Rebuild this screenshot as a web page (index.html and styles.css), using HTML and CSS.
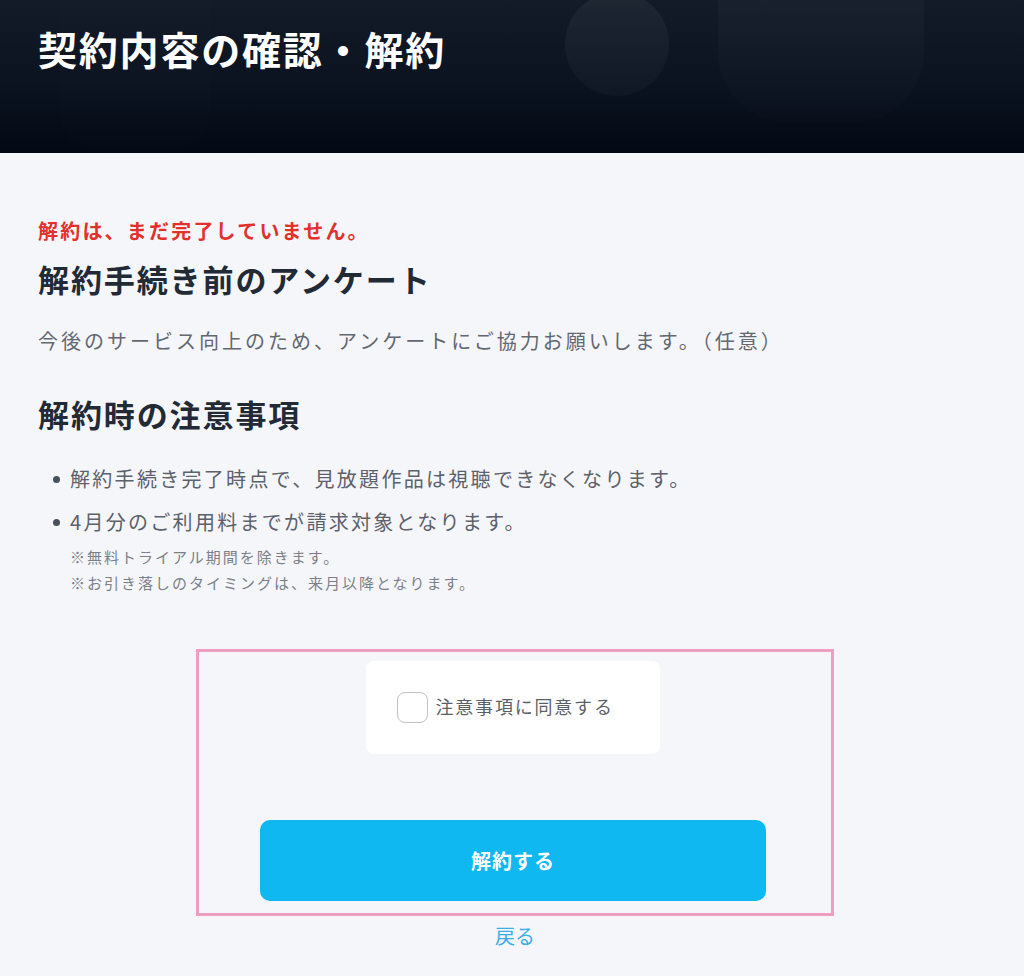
FILE: index.html
```html
<!DOCTYPE html>
<html lang="ja">
<head>
<meta charset="utf-8">
<link rel="stylesheet" href="styles.css">
</head>
<body>
<header class="hero">
  <div class="deco deco-circle"></div>
  <div class="deco deco-u"></div>
  <div class="deco deco-bar"></div>
  <h1 class="hero-title">契約内容の確認・解約</h1>
</header>
<main class="content">
  <p class="warning">解約は、まだ完了していません。</p>
  <h2 class="section-title">解約手続き前のアンケート</h2>
  <p class="lead">今後のサービス向上のため、アンケートにご協力お願いします。（任意）</p>
  <h2 class="section-title second">解約時の注意事項</h2>
  <ul class="notes">
    <li>解約手続き完了時点で、見放題作品は視聴できなくなります。</li>
    <li>4月分のご利用料までが請求対象となります。
      <div class="sub">※無料トライアル期間を除きます。</div>
      <div class="sub">※お引き落しのタイミングは、来月以降となります。</div>
    </li>
  </ul>
  <div class="action-area">
    <div class="agree-card">
      <label class="agree">
        <span class="checkbox"></span>
        <span class="agree-text">注意事項に同意する</span>
      </label>
    </div>
    <button class="cancel-btn" type="button">解約する</button>
  </div>
  <div class="back-row"><a class="back" href="#">戻る</a></div>
</main>
</body>
</html>
```
FILE: styles.css
```css
* { box-sizing: border-box; }
html, body { margin: 0; padding: 0; }
body {
  background: #f5f6fa;
  font-family: "Noto Sans CJK JP", "Noto Sans", sans-serif;
  color: #2a2f3a;
}
.hero {
  position: relative;
  height: 153px;
  overflow: hidden;
  background: linear-gradient(180deg, #131b28 0%, #0b1320 55%, #020914 100%);
  padding: 22px 38px 0;
}
.deco { position: absolute; }
.deco-circle {
  left: 565px; top: -8px;
  width: 104px; height: 104px;
  border-radius: 50%;
  background: linear-gradient(180deg, rgba(255,255,255,0.05) 0%, rgba(255,255,255,0.025) 100%);
}
.deco-u {
  left: 718px; top: -10px;
  width: 206px; height: 132px;
  border-radius: 0 0 70px 70px;
  background: linear-gradient(180deg, rgba(255,255,255,0.028) 0%, rgba(255,255,255,0.008) 100%);
}
.deco-bar {
  left: 60px; top: 0;
  width: 150px; height: 153px;
  border-radius: 0 0 40px 40px;
  background: rgba(255,255,255,0.008);
}
.hero-title {
  position: relative;
  margin: 0;
  color: #fff;
  font-size: 39px;
  font-weight: 700;
  line-height: 52px;
  letter-spacing: 1.8px;
}
.content {
  padding: 64px 38px 20px;
}
.warning {
  margin: 0;
  color: #e3302b;
  font-size: 20px;
  font-weight: 700;
  line-height: 28px;
  letter-spacing: 2.2px;
}
.section-title {
  margin: 12px 0 0;
  font-size: 31px;
  font-weight: 700;
  line-height: 44px;
  letter-spacing: 1.9px;
  color: #222a35;
}
.section-title.second { margin-top: 36px; }
.lead {
  margin: 25px 0 0;
  font-size: 20px;
  line-height: 30px;
  letter-spacing: 3px;
  color: #636870;
}
.notes {
  margin: 28px 0 0;
  padding: 0 0 0 32px;
  list-style: none;
  color: #5c616a;
}
.notes li {
  position: relative;
  font-size: 20px;
  line-height: 30px;
  letter-spacing: 2.3px;
  margin-bottom: 13px;
}
.notes li::before {
  content: "";
  position: absolute;
  left: -17px; top: 12px;
  width: 7px; height: 7px;
  border-radius: 50%;
  background: #4a505a;
}
.notes .sub {
  font-size: 15px;
  line-height: 26px;
  letter-spacing: 2px;
  color: #7b8088;
}
.notes .sub:first-child { margin-top: 7px; }
.action-area {
  margin: 53px 0 0 158px;
  width: 638px;
  border: 3px solid #ee9ec3;
  padding: 9px 0 12px;
  display: flex;
  flex-direction: column;
  align-items: center;
}
.agree-card {
  width: 294px;
  height: 93px;
  background: #fff;
  border-radius: 8px;
  display: flex;
  align-items: center;
  padding-left: 31px;
  margin-left: -5px;
}
.agree {
  display: flex;
  align-items: center;
  gap: 8px;
  cursor: pointer;
}
.checkbox {
  width: 31px; height: 31px;
  border: 1.5px solid #bfc3c9;
  border-radius: 8px;
  background: #fff;
}
.agree-text {
  font-size: 18px;
  letter-spacing: 1.8px;
  color: #5a5f68;
  margin-top: -4px;
}
.cancel-btn {
  margin: 66px 0 0 -4px;
  width: 506px;
  height: 81px;
  border: none;
  border-radius: 10px;
  background: #10b8f2;
  color: #fff;
  font-family: inherit;
  font-size: 20px;
  font-weight: 700;
  letter-spacing: 1px;
}
.back-row {
  text-align: center;
  margin-top: 5px;
  padding-left: 6px;
}
.back {
  color: #3aaee6;
  text-decoration: none;
  font-size: 20px;
  line-height: 30px;
}
```
